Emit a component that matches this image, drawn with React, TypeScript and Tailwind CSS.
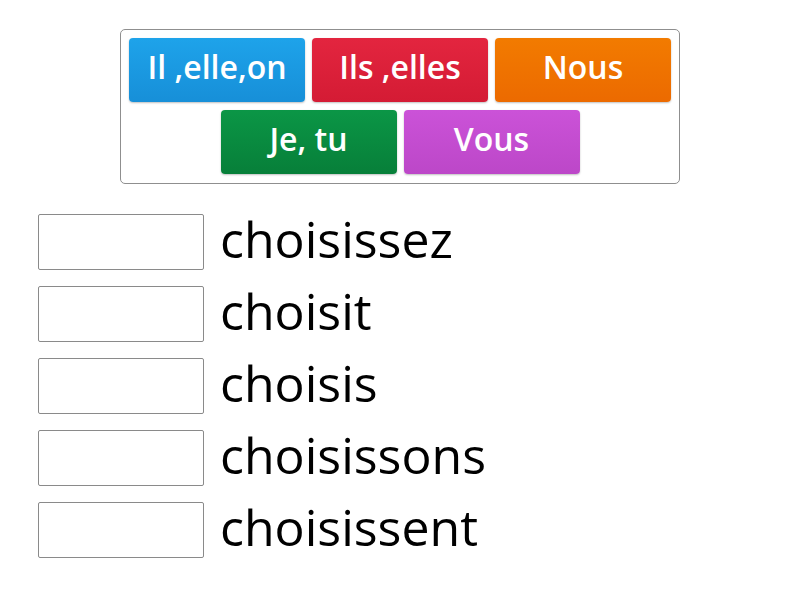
import React from "react";

const buttons1 = [
  { label: "Il ,elle,on", cls: "bg-gradient-to-b from-[#1ea3ea] to-[#178fd8]" },
  { label: "Ils ,elles", cls: "bg-gradient-to-b from-[#e3253f] to-[#d41b34]" },
  { label: "Nous", cls: "bg-gradient-to-b from-[#f27b00] to-[#ec6a00]" },
];
const buttons2 = [
  { label: "Je, tu", cls: "bg-gradient-to-b from-[#0b9646] to-[#077f39]" },
  { label: "Vous", cls: "bg-gradient-to-b from-[#cb52d8] to-[#bc47c8]" },
];
const words = ["choisissez", "choisit", "choisis", "choisissons", "choisissent"];

function Btn({ label, cls }: { label: string; cls: string }) {
  return (
    <div
      className={`w-[176px] h-[64px] rounded-[4px] flex items-center justify-center text-white font-semibold text-[32px] leading-none pb-[6px] shadow-[0_1px_2px_rgba(0,0,0,0.25)] ${cls}`}
    >
      {label}
    </div>
  );
}

export default function App() {
  return (
    <div
      className="w-[800px] h-[600px] bg-white relative"
      style={{ fontFamily: '"Open Sans", "Noto Sans", sans-serif' }}
    >
      <div className="pt-[29px] flex justify-center">
        <div className="w-[560px] border border-[#8f8f8f] rounded-[5px] pt-[8px] pb-[9px] px-[8px] flex flex-col gap-[8px] items-center">
          <div className="flex gap-[7px]">
            {buttons1.map((b) => (
              <Btn key={b.label} {...b} />
            ))}
          </div>
          <div className="flex gap-[7px]">
            {buttons2.map((b) => (
              <Btn key={b.label} {...b} />
            ))}
          </div>
        </div>
      </div>
      <div className="mt-[30px] pl-[38px] flex flex-col gap-[17px]">
        {words.map((w) => (
          <div key={w} className="flex items-center h-[55px]">
            <div className="w-[166px] h-[56px] border border-[#8a8a8a] rounded-[2px] bg-white shrink-0" />
            <div className="ml-[16px] text-[50px] leading-none text-black pb-[6px]">{w}</div>
          </div>
        ))}
      </div>
    </div>
  );
}
